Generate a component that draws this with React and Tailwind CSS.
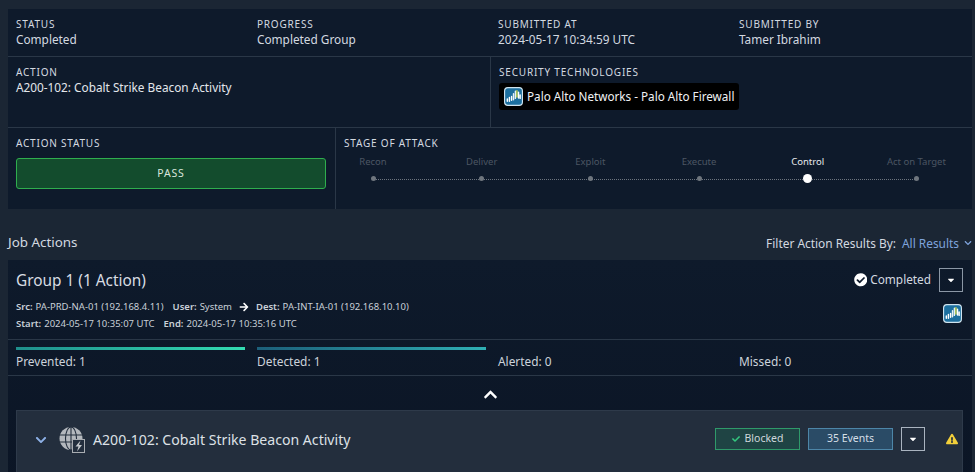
import React from 'react';
import { FaCheckCircle, FaChevronDown, FaChevronUp, FaCaretDown, FaArrowRight, FaExclamationTriangle, FaCheck } from 'react-icons/fa';

const stages = ['Recon', 'Deliver', 'Exploit', 'Execute', 'Control', 'Act on Target'];

function PaloLogo({ className }) {
  return (
    <svg viewBox="0 0 20 20" className={className}>
      <rect x="0.6" y="0.6" width="18.8" height="18.8" rx="3.5" fill="#1c6f9f" stroke="#cfe3ee" strokeWidth="1.2" />
      <g strokeWidth="1.5" fill="none" strokeLinecap="round">
        <path d="M3.5 12.5v2.5M5.7 11v4M8 10v4" stroke="#ffffff" />
        <path d="M10 7v6.5M12 4.5v7.5" stroke="#e8f2f5" />
        <path d="M13.6 4v6.5" stroke="#c9d64a" />
        <path d="M15.3 5.5v6M17 8.5v3.5" stroke="#ffffff" />
      </g>
    </svg>
  );
}

function GlobeIcon() {
  return (
    <svg viewBox="0 0 26 26" className="w-[26px] h-[26px]">
      <circle cx="12" cy="11.5" r="11.5" fill="#b4b8bd" />
      <g stroke="#232e3d" strokeWidth="1.1" fill="none">
        <path d="M0.5 8h23M0.5 15h23M12 0v23" />
        <ellipse cx="12" cy="11.5" rx="5.5" ry="11.5" />
      </g>
      <rect x="13.5" y="12.5" width="12" height="13" fill="#232e3d" stroke="#a9adb2" strokeWidth="1" />
      <path d="M21.5 13.5l-5 6h3l-1.5 5 5-6.5h-3z" fill="#c4c8cc" />
    </svg>
  );
}

function Label({ children }) {
  return <div className="text-[10px] leading-[15px] tracking-[0.08em] uppercase text-[#d3d9e0]">{children}</div>;
}

function Info({ label, value }) {
  return (
    <div className="w-[241px] pl-2 pt-[8px]">
      <Label>{label}</Label>
      <div className="-mt-px text-[11.8px] leading-[17px] text-[#d3d9e0]">{value}</div>
    </div>
  );
}

function CaretBox({ light }) {
  return (
    <div className={`w-6 h-6 border flex items-center justify-center text-white text-[10px] ${light ? 'border-[#aab4c0]' : 'border-[#8b97a5]'}`}>
      <FaCaretDown />
    </div>
  );
}

function Score({ label, bar }) {
  return (
    <div className="w-[241px] pl-2">
      <div className={`h-[3px] w-[229px] ${bar || ''}`} />
      <div className="mt-[3px] text-[11.9px] leading-[16px] text-[#ccd3db]">{label}</div>
    </div>
  );
}

export default function App() {
  return (
    <div className="w-[975px] h-[472px] overflow-hidden bg-[#1b2634] pt-[9px] pl-2 pr-[3px] font-['Noto_Sans','Open_Sans',sans-serif]">
      {/* job summary */}
      <div className="bg-[#0e1a2b]">
        <div className="flex h-[48px] border-b border-[#2a3747]">
          <Info label="Status" value="Completed" />
          <Info label="Progress" value="Completed Group" />
          <Info label="Submitted At" value="2024-05-17 10:34:59 UTC" />
          <Info label="Submitted By" value="Tamer Ibrahim" />
        </div>
        <div className="flex h-[71px] border-b border-[#2a3747]">
          <div className="w-[483px] pl-2 pt-[8px] border-r border-[#2a3747]">
            <Label>Action</Label>
            <div className="-mt-px text-[11.8px] leading-[17px] text-[#e3e7ec]">A200-102: Cobalt Strike Beacon Activity</div>
          </div>
          <div className="pl-2 pt-[8px]">
            <Label>Security Technologies</Label>
            <div className="mt-[3px] inline-flex items-center gap-[4px] h-[27px] pl-[5px] pr-[5px] bg-black rounded-[3px]">
              <PaloLogo className="w-[19px] h-[19px]" />
              <span className="text-[11.7px] text-[#f0f2f4]">Palo Alto Networks - Palo Alto Firewall</span>
            </div>
          </div>
        </div>
        <div className="flex h-[81px]">
          <div className="w-[328px] pl-2 pt-[8px] border-r border-[#2a3747]">
            <Label>Action Status</Label>
            <div className="mt-[7px] w-[310px] h-[31px] flex items-center justify-center rounded-[3px] border border-[#2fae4e] bg-[#134c2d] text-[10.5px] tracking-[0.08em] text-[#d9e6dc]">
              <span className="pt-px">PASS</span>
            </div>
          </div>
          <div className="pl-2 pt-[8px] w-[608px]">
            <Label>Stage of Attack</Label>
            <div className="relative mt-[3px] w-[601.5px] flex justify-between">
              <div className="absolute left-[29px] right-[29px] top-[25px] border-t border-dotted border-[#6c747e]" />
              {stages.map((s) => (
                <div key={s} className="relative w-[58px] flex flex-col items-center">
                  <div className={`text-[9.5px] leading-[16px] whitespace-nowrap ${s === 'Control' ? 'text-[#e8ebee]' : 'text-[#4c5663]'}`}>{s}</div>
                  <div className="h-[15px] mt-px flex items-center">
                    {s === 'Control' ? (
                      <div className="w-[9px] h-[9px] rounded-full bg-white" />
                    ) : (
                      <div className="w-[5px] h-[5px] rounded-full bg-[#6f767e]" />
                    )}
                  </div>
                </div>
              ))}
            </div>
          </div>
        </div>
      </div>

      {/* job actions header */}
      <div className="flex justify-between h-[51px] pt-[24px]">
        <div className="text-[13.4px] leading-[18px] text-[#d3d9e0]">Job Actions</div>
        <div className="flex items-center h-[18px] mt-[1px] text-[11.9px] leading-[18px]">
          <span className="text-[#d3d9e0]">Filter Action Results By:</span>
          <span className="ml-[6px] text-[#7fa3dc]">All Results</span>
          <FaChevronDown className="ml-[5px] text-[8px] text-[#7fa3dc]" />
        </div>
      </div>

      {/* group */}
      <div className="bg-gradient-to-b from-[#0e1a2b] to-[#0b1525]">
        <div className="flex justify-between h-[80px] border-b border-[#2a3747] pl-2 pr-[9px]">
          <div>
            <div className="pt-[9px] text-[15.4px] leading-[24px] text-[#d8dde3]">Group 1 (1 Action)</div>
            <div className="mt-[5px] flex items-center text-[9.5px] leading-[17px] text-[#c9d0d8]">
              <b className="font-semibold">Src:</b>
              <span className="ml-[3px]">PA-PRD-NA-01 (192.168.4.11)</span>
              <b className="font-semibold ml-[9px]">User:</b>
              <span className="ml-[3px]">System</span>
              <FaArrowRight className="ml-[7px] mr-[7px] text-[10px] text-white" />
              <b className="font-semibold">Dest:</b>
              <span className="ml-[3px]">PA-INT-IA-01 (192.168.10.10)</span>
            </div>
            <div className="flex items-center text-[9.5px] leading-[17px] text-[#c9d0d8]">
              <b className="font-semibold">Start:</b>
              <span className="ml-[3px]">2024-05-17 10:35:07 UTC</span>
              <b className="font-semibold ml-[9px]">End:</b>
              <span className="ml-[3px]">2024-05-17 10:35:16 UTC</span>
            </div>
          </div>
          <div className="flex flex-col items-end pt-[8px]">
            <div className="flex items-center">
              <FaCheckCircle className="text-[13.5px] text-white" />
              <span className="ml-[3px] mr-[-1px] text-[11.8px] text-[#d3d9e0]">Completed</span>
              <div className="ml-[9px]"><CaretBox /></div>
            </div>
            <PaloLogo className="mt-[12px] mr-[1px] w-[19px] h-[19px]" />
          </div>
        </div>

        <div className="flex h-[36px] pt-[7px] border-b border-[#2a3747]">
          <Score label="Prevented: 1" bar="bg-gradient-to-r from-[#1f8f8c] to-[#33dcb2]" />
          <Score label="Detected: 1" bar="bg-gradient-to-r from-[#1c5f7a] to-[#2fb0b4]" />
          <Score label="Alerted: 0" />
          <Score label="Missed: 0" />
        </div>

        <div className="flex justify-center items-center h-[34px] pt-[2px] text-white text-[15px]">
          <FaChevronUp />
        </div>

        {/* action row */}
        <div className="ml-2 mr-[9px] h-[80px] bg-[#232e3d] border border-[#2e3a4a] flex items-start justify-between pt-[16px] pl-[18px] pr-[4px]">
          <div className="flex items-center">
            <FaChevronDown className="text-[12px] text-[#8db0e6]" />
            <div className="ml-[12px]"><GlobeIcon /></div>
            <span className="ml-[8px] text-[14.1px] text-[#dde1e6]">A200-102: Cobalt Strike Beacon Activity</span>
          </div>
          <div className="flex items-center">
            <div className="w-[85px] h-[22px] flex items-center justify-center gap-[5px] border border-[#2f9a6a] bg-[#1f4444] text-[10.5px] text-[#cfd8dc]">
              <FaCheck className="text-[8px] text-[#34c77f]" />
              Blocked
            </div>
            <div className="ml-2 w-[85px] h-[22px] flex items-center justify-center border border-[#4d86a8] bg-[#2a4b66] text-[10.5px] text-[#d5dfe6]">
              35 Events
            </div>
            <div className="ml-2"><CaretBox light /></div>
            <FaExclamationTriangle className="ml-[21px] text-[12px] text-[#f2cf3a]" />
          </div>
        </div>
      </div>
    </div>
  );
}
